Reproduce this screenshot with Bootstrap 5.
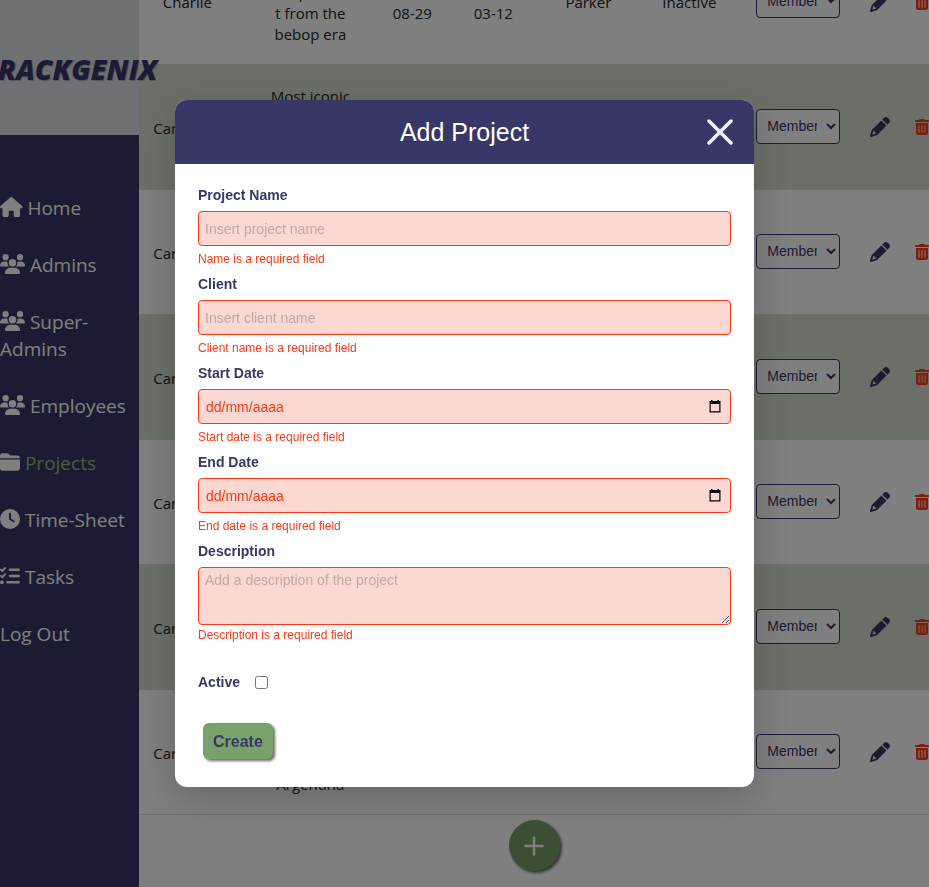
<!DOCTYPE html>
<html lang="en">
<head>
<meta charset="utf-8">
<meta name="viewport" content="width=device-width, initial-scale=1">
<title>Trackgenix - Projects</title>
<link href="https://cdn.jsdelivr.net/npm/bootstrap@5.3.0/dist/css/bootstrap.min.css" rel="stylesheet">
<style>
:root { --navy: #373867; --leaf: #79a16b; --alert: #fa3a18; }
body { font-family: "Open Sans", "Noto Sans", sans-serif; color: #212529; }
.side { flex: 0 0 15%; min-width: 0; background: var(--navy); z-index: 1; }
.side-logo { height: 135px; background: #dee0e9; padding-top: 2px; }
.side-logo a { font-size: 28px; line-height: 32px; font-weight: 800; font-style: italic; color: var(--navy); white-space: nowrap; text-shadow: 1px 1px 1px rgba(0,0,0,.25); }
.side-menu { padding-top: 60px; gap: 30px; font-size: 19px; line-height: 27px; }
.side-menu a { color: #fff; text-decoration: none; }
.side-menu a.current { color: #85be72; }
.side-menu svg { height: 20px; fill: #fff; vertical-align: -2px; }
.page-main { min-width: 0; }
.projects { table-layout: fixed; min-width: 792px; font-size: 15px; line-height: 21px; text-align: center; }
.projects tr { height: 125px; border-bottom: 1px solid #dcdcdc; }
.projects tr:nth-child(even) { background: #d5e1d1; }
.projects td { padding: 2px 2px 0; overflow-wrap: break-word; }
.projects .tool { padding: 0 2px 2px; }
.col-desc div { width: 90px; margin: 0 auto; }
.projects select { width: 84px; height: 35px; padding: 0 6px; border: 1px solid var(--navy); border-radius: 4px; background: #fff; color: var(--navy); font: 14px "Liberation Sans", Arial, sans-serif; }
.icon-btn { border: 0; padding: 0; background: none; line-height: 0; vertical-align: middle; }
.add-btn { width: 51px; height: 51px; background: var(--leaf); box-shadow: 2px 2px 3px rgba(0,0,0,.6); margin-top: 5px; line-height: 0; }
.modal { background: rgba(0,0,0,.5); font-family: "Liberation Sans", Arial, sans-serif; }
.modal-dialog { max-width: 579px; }
.modal-content { border: 0; border-radius: 12px; overflow: hidden; }
.modal-frame { width: 100%; border-radius: 12px; box-shadow: 0 10px 40px rgba(0,0,0,.2); }
.modal-header { height: 64px; background: var(--navy); border: 0; border-radius: 0; padding: 0 21px; }
.modal-header h1 { font-size: 25px; line-height: 32px; color: #fff; font-weight: 400; text-align: center; padding-left: 26px; }
.modal-body { padding: 21px 23px 28px; color: var(--navy); }
.field { margin-bottom: 6px; }
.field label, .tick label { font-size: 14px; line-height: 20px; font-weight: 700; }
.field label { display: block; margin-bottom: 6px; }
.field .form-control { height: 35px; padding: 0 6px; font-size: 14px; line-height: 18px; color: var(--alert); background: #fcd8d2; border: 1px solid var(--alert); border-radius: 4px; }
.field textarea.form-control { height: 58px; padding-top: 3px; min-height: 0; }
.field .form-control::placeholder { color: #bfaaa6; opacity: 1; }
.field .date-box::placeholder { color: var(--alert); }
.field .date-box { padding-left: 7px; }
.field p { margin: 4px 0 0; font-size: 12px; line-height: 18px; color: var(--alert); }
.field textarea + p { margin-top: 1px; }
.cal { right: 10px; top: 11px; }
.tick { gap: 15px; margin-top: 28px; }
.tick input { width: 13px; height: 13px; margin: 0; }
.create { margin: 31px 0 0 5px; height: 36px; padding: 1px 10px 0; border: 0; border-radius: 6px; background: var(--leaf); color: var(--navy); font-size: 16px; font-weight: 700; box-shadow: 2px 2px 3px rgba(0,0,0,.6); display: block; }
</style>
<script src="https://cdn.jsdelivr.net/npm/bootstrap@5.3.0/dist/js/bootstrap.bundle.min.js"></script>
</head>
<body>
<svg class="d-none">
  <symbol id="i-users" viewBox="0 0 640 512"><path d="M144 0a80 80 0 1 1 0 160A80 80 0 1 1 144 0zM512 0a80 80 0 1 1 0 160A80 80 0 1 1 512 0zM0 298.7C0 239.8 47.8 192 106.7 192h42.7c15.9 0 31 3.5 44.6 9.7c-1.3 7.2-1.9 14.7-1.9 22.3c0 38.2 16.8 72.5 43.3 96H21.3C9.6 320 0 310.4 0 298.7zM405.3 320c26.6-23.5 43.3-57.8 43.3-96c0-7.6-.7-15-1.9-22.3c13.6-6.3 28.7-9.7 44.6-9.7h42.7C592.2 192 640 239.8 640 298.7c0 11.8-9.6 21.3-21.3 21.3H405.3zM224 224a96 96 0 1 1 192 0 96 96 0 1 1 -192 0zM128 485.3C128 411.7 187.7 352 261.3 352H378.7C452.3 352 512 411.7 512 485.3c0 14.7-11.9 26.7-26.7 26.7H154.7c-14.7 0-26.7-11.9-26.7-26.7z"/></symbol>
  <symbol id="i-pencil" viewBox="0 0 512 512"><path d="M410.3 231l11.3-11.3-33.9-33.9-62.1-62.1L291.7 89.8l-11.3 11.3-22.6 22.6L58.6 322.9c-10.4 10.4-18 23.3-22.2 37.4L1 480.7c-2.5 8.4-.2 17.5 6.1 23.7s15.3 8.5 23.7 6.1l120.3-35.4c14.1-4.2 27-11.8 37.4-22.2L387.7 253.7 410.3 231zM160 399.4l-9.1 22.7c-4 3.1-8.5 5.4-13.3 6.9L59.4 452l23-78.1c1.4-4.9 3.8-9.4 6.9-13.3l22.7-9.1v32c0 8.8 7.2 16 16 16h32zM362.7 18.7L348.3 33.2 325.7 55.8 314.3 67.1l33.9 33.9 62.1 62.1 33.9 33.9 11.3-11.3 22.6-22.6 14.5-14.5c25-25 25-65.5 0-90.5L453.3 18.7c-25-25-65.5-25-90.5 0z"/></symbol>
  <symbol id="i-trash" viewBox="0 0 448 512"><path d="M135.2 17.7C140.6 6.8 151.7 0 163.8 0H284.2c12.1 0 23.2 6.8 28.6 17.7L320 32h96c17.7 0 32 14.3 32 32s-14.3 32-32 32H32C14.3 96 0 81.7 0 64S14.3 32 32 32h96l7.2-14.3zM32 128H416V448c0 35.3-28.7 64-64 64H96c-35.3 0-64-28.7-64-64V128zm96 64c-8.8 0-16 7.2-16 16V432c0 8.8 7.2 16 16 16s16-7.2 16-16V208c0-8.8-7.2-16-16-16zm96 0c-8.8 0-16 7.2-16 16V432c0 8.8 7.2 16 16 16s16-7.2 16-16V208c0-8.8-7.2-16-16-16zm96 0c-8.8 0-16 7.2-16 16V432c0 8.8 7.2 16 16 16s16-7.2 16-16V208c0-8.8-7.2-16-16-16z"/></symbol>
  <symbol id="i-cal" viewBox="0 0 12 13"><path fill-rule="evenodd" d="M2 0h1.500v1h5V0H10v1h1.500v11.500H.5V1H2zM1.700 4v7.300h8.600V4z"/></symbol>
</svg>
<div class="d-flex vh-100 overflow-hidden">
  <aside class="side position-relative">
    <div class="side-logo d-flex justify-content-center align-items-center"><a class="text-decoration-none" href="#">TRACKGENIX</a></div>
    <nav class="side-menu d-flex flex-column">
      <a href="#"><svg viewBox="0 0 576 512"><path d="M575.8 255.5c0 18-15 32.1-32 32.1h-32l.7 160.2c0 2.7-.2 5.4-.5 8.1V472c0 22.1-17.9 40-40 40H392c-22.1 0-40-17.9-40-40V384c0-17.7-14.3-32-32-32H256c-17.7 0-32 14.3-32 32v88c0 22.1-17.9 40-40 40H104c-22.1 0-40-17.9-40-40V287.6H32c-18 0-32-14-32-32.1c0-9 3-17 10-24L266.4 8c7-7 15-8 22-8s15 2 21 7L564.8 231.5c8 7 12 15 11 24z"/></svg> Home</a>
      <a href="#"><svg viewBox="0 0 640 512"><use href="#i-users"/></svg> Admins</a>
      <a href="#"><svg viewBox="0 0 640 512"><use href="#i-users"/></svg> Super-Admins</a>
      <a href="#"><svg viewBox="0 0 640 512"><use href="#i-users"/></svg> Employees</a>
      <a href="#" class="current"><svg viewBox="0 0 512 512"><path d="M448 480H64c-35.3 0-64-28.7-64-64V192H512V416c0 35.3-28.7 64-64 64zm64-320H0V96C0 60.7 28.7 32 64 32H181.5c17 0 33.3 6.7 45.3 18.7L258.7 82.7c6 6 14.1 9.4 22.6 9.4H448c35.3 0 64 28.7 64 64z"/></svg> Projects</a>
      <a href="#"><svg viewBox="0 0 512 512"><path fill-rule="evenodd" d="M256 0a256 256 0 1 1 0 512A256 256 0 1 1 256 0zM232 120V256c0 8 4 15.5 10.7 20l96 64c11 7.4 25.9 4.4 33.3-6.7s4.4-25.9-6.7-33.3L280 243.2V120c0-13.3-10.7-24-24-24s-24 10.7-24 24z"/></svg> Time-Sheet</a>
      <a href="#"><svg viewBox="0 0 512 512"><g fill="none" stroke="#fff" stroke-linecap="round" stroke-linejoin="round"><path stroke-width="48" d="M24 92l36 36 72-80M24 252l36 36 72-80"/><path stroke-width="64" d="M256 96h224M256 256h224M192 416h288"/></g><circle cx="48" cy="416" r="48"/></svg> Tasks</a>
      <a href="#">Log Out</a>
    </nav>
  </aside>
  <main class="page-main flex-fill overflow-hidden d-flex flex-column justify-content-end align-items-center pb-3">
    <table class="projects w-100 align-self-start">
      <colgroup><col width="96"><col width="150"><col width="54"><col width="108"><col width="82"><col width="120"><col width="98"><col width="66"><col width="18"></colgroup>
      <tbody>
        <tr><td>Charlie</td><td class="col-desc"><div>Jazz independen<br>t from the bebop era</div></td><td>2022-<br>08-29</td><td>2023-<br>03-12</td><td>Parker</td><td>Inactive</td><td class="tool"><select aria-label="Members"><option>Members</option></select></td><td class="tool"><button class="icon-btn" aria-label="Edit"><svg width="20" height="20" fill="#373867"><use href="#i-pencil"/></svg></button></td><td class="tool"><button class="icon-btn" aria-label="Delete"><svg width="14" height="16" fill="#fa3a18"><use href="#i-trash"/></svg></button></td></tr>
        <tr><td>Carnavals</td><td class="col-desc"><div>Most iconic carnival in all of Argentina</div></td><td></td><td></td><td></td><td></td><td class="tool"><select aria-label="Members"><option>Members</option></select></td><td class="tool"><button class="icon-btn" aria-label="Edit"><svg width="20" height="20" fill="#373867"><use href="#i-pencil"/></svg></button></td><td class="tool"><button class="icon-btn" aria-label="Delete"><svg width="14" height="16" fill="#fa3a18"><use href="#i-trash"/></svg></button></td></tr>
        <tr><td>Carnavals</td><td></td><td></td><td></td><td></td><td></td><td class="tool"><select aria-label="Members"><option>Members</option></select></td><td class="tool"><button class="icon-btn" aria-label="Edit"><svg width="20" height="20" fill="#373867"><use href="#i-pencil"/></svg></button></td><td class="tool"><button class="icon-btn" aria-label="Delete"><svg width="14" height="16" fill="#fa3a18"><use href="#i-trash"/></svg></button></td></tr>
        <tr><td>Carnavals</td><td></td><td></td><td></td><td></td><td></td><td class="tool"><select aria-label="Members"><option>Members</option></select></td><td class="tool"><button class="icon-btn" aria-label="Edit"><svg width="20" height="20" fill="#373867"><use href="#i-pencil"/></svg></button></td><td class="tool"><button class="icon-btn" aria-label="Delete"><svg width="14" height="16" fill="#fa3a18"><use href="#i-trash"/></svg></button></td></tr>
        <tr><td>Carnavals</td><td></td><td></td><td></td><td></td><td></td><td class="tool"><select aria-label="Members"><option>Members</option></select></td><td class="tool"><button class="icon-btn" aria-label="Edit"><svg width="20" height="20" fill="#373867"><use href="#i-pencil"/></svg></button></td><td class="tool"><button class="icon-btn" aria-label="Delete"><svg width="14" height="16" fill="#fa3a18"><use href="#i-trash"/></svg></button></td></tr>
        <tr><td>Carnavals</td><td></td><td></td><td></td><td></td><td></td><td class="tool"><select aria-label="Members"><option>Members</option></select></td><td class="tool"><button class="icon-btn" aria-label="Edit"><svg width="20" height="20" fill="#373867"><use href="#i-pencil"/></svg></button></td><td class="tool"><button class="icon-btn" aria-label="Delete"><svg width="14" height="16" fill="#fa3a18"><use href="#i-trash"/></svg></button></td></tr>
        <tr><td>Carnavals</td><td class="col-desc"><div>Most iconic carnival in all of Argentina</div></td><td></td><td></td><td></td><td></td><td class="tool"><select aria-label="Members"><option>Members</option></select></td><td class="tool"><button class="icon-btn" aria-label="Edit"><svg width="20" height="20" fill="#373867"><use href="#i-pencil"/></svg></button></td><td class="tool"><button class="icon-btn" aria-label="Delete"><svg width="14" height="16" fill="#fa3a18"><use href="#i-trash"/></svg></button></td></tr>
      </tbody>
    </table>
    <button class="add-btn btn rounded-circle border-0 p-0 flex-shrink-0" aria-label="Add project"><svg width="20" height="20" viewBox="0 0 20 20"><path d="M10 1.500v17M1.500 10h17" stroke="#fff" stroke-width="2.500" stroke-linecap="round"/></svg></button>
  </main>
</div>

<div class="modal show d-block" role="dialog" aria-labelledby="dlg-title">
  <div class="modal-dialog modal-dialog-centered">
    <div class="modal-frame">
    <div class="modal-content">
      <div class="modal-header d-flex align-items-center">
        <h1 class="flex-fill m-0" id="dlg-title">Add Project</h1>
        <button type="button" class="icon-btn" aria-label="Close"><svg width="26" height="26" viewBox="0 0 26 26"><path d="M2 2l22 22M24 2L2 24" stroke="#f0effa" stroke-width="3.500" stroke-linecap="round"/></svg></button>
      </div>
      <form class="modal-body">
        <div class="field"><label for="f-name">Project Name</label><input class="form-control" id="f-name" type="text" placeholder="Insert project name"><p>Name is a required field</p></div>
        <div class="field"><label for="f-client">Client</label><input class="form-control" id="f-client" type="text" placeholder="Insert client name"><p>Client name is a required field</p></div>
        <div class="field"><label for="f-start">Start Date</label><div class="position-relative"><input class="form-control date-box" id="f-start" type="text" placeholder="dd/mm/aaaa"><button type="button" class="icon-btn cal position-absolute" aria-label="Pick start date"><svg width="12" height="13"><use href="#i-cal"/></svg></button></div><p>Start date is a required field</p></div>
        <div class="field"><label for="f-end">End Date</label><div class="position-relative"><input class="form-control date-box" id="f-end" type="text" placeholder="dd/mm/aaaa"><button type="button" class="icon-btn cal position-absolute" aria-label="Pick end date"><svg width="12" height="13"><use href="#i-cal"/></svg></button></div><p>End date is a required field</p></div>
        <div class="field"><label for="f-desc">Description</label><textarea class="form-control" id="f-desc" placeholder="Add a description of the project"></textarea><p>Description is a required field</p></div>
        <div class="tick d-flex align-items-center"><label for="f-active">Active</label><input id="f-active" type="checkbox"></div>
        <button type="submit" class="create">Create</button>
      </form>
    </div>
    </div>
  </div>
</div>
</body>
</html>
